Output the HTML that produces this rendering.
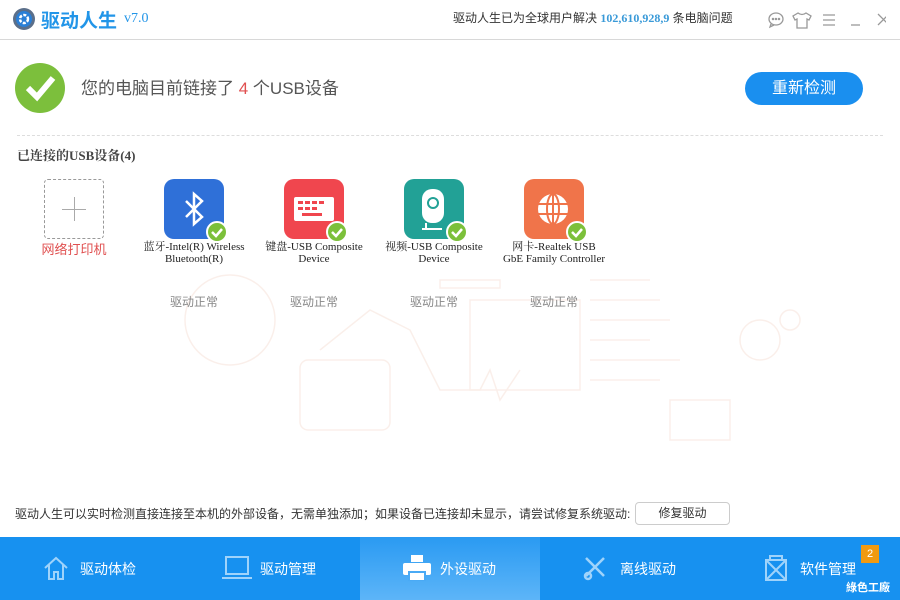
<!DOCTYPE html>
<html><head><meta charset="utf-8"><style>
*{margin:0;padding:0;box-sizing:border-box}
body{width:900px;height:600px;overflow:hidden;background:#fff;font-family:"Liberation Serif","Noto Serif CJK SC",serif;position:relative;color:#333}
.a{position:absolute}
.sans{font-family:"Liberation Sans","Noto Sans CJK SC",sans-serif}
.ic{position:absolute;width:60px;height:60px;border-radius:10px;top:179px}
.ck{position:absolute;right:-4px;bottom:-4px;width:22px;height:22px;border-radius:50%;background:#7cc03a;border:2px solid #fff}
.nm{position:absolute;top:241px;width:130px;text-align:center;font-size:11px;line-height:12px;color:#222}
.st{position:absolute;top:293px;width:80px;text-align:center;font-size:12px;color:#888}
.tab{position:absolute;top:537px;height:63px;width:180px;color:#fff;font-size:14px}
.tab span{position:absolute;left:80px;top:22px}
</style></head><body>
<div class="a" style="left:0;top:0;width:900px;height:40px;border-bottom:1px solid #d8d8d8"></div>
<svg class="a" style="left:12px;top:7px" width="24" height="24"><circle cx="12" cy="12" r="11" fill="#5b6f8a"/><circle cx="12" cy="12" r="8" fill="#2a7fd6"/><circle cx="12" cy="12" r="4" fill="none" stroke="#fff" stroke-width="2.5" stroke-dasharray="3 1.5"/></svg>
<div class="a sans" style="left:41px;top:6px;font-size:19px;color:#2295e8;font-weight:bold">驱动人生</div>
<div class="a" style="left:124px;top:11px;font-size:14px;color:#2295e8">v7.0</div>
<div class="a sans" style="left:453px;top:9px;font-size:12px;color:#333">驱动人生已为全球用户解决 <b style="color:#3a9ad8;font-family:'Liberation Serif'">102,610,928,9</b> 条电脑问题</div>
<svg class="a" style="left:766px;top:10px" width="120" height="20" fill="none" stroke="#999" stroke-width="1.3">
<ellipse cx="10" cy="9" rx="7" ry="6"/><path d="M5 14l-1 3 4-2"/><circle cx="7" cy="9" r=".6" fill="#999"/><circle cx="10" cy="9" r=".6" fill="#999"/><circle cx="13" cy="9" r=".6" fill="#999"/>
<path d="M32 3l-5 3 2 4 2-1v9h10V9l2 1 2-4-5-3q-4 3-8 0z"/>
<path d="M57 5h12M57 10h12M57 15h12"/>
<path d="M85 15h9"/><path d="M112 4l11 11M123 4l-11 11"/></svg>
<svg class="a" style="left:15px;top:63px" width="50" height="50"><circle cx="25" cy="25" r="25" fill="#7cbf3c"/><path d="M13 25l9 9 16-19" stroke="#fff" stroke-width="6" fill="none"/></svg>
<div class="a sans" style="left:81px;top:74px;font-size:17px;color:#555">您的电脑目前链接了 <span style="color:#e05050">4</span> 个USB设备</div>
<div class="a sans" style="left:745px;top:72px;width:118px;height:33px;border-radius:17px;background:#1a8fef;color:#fff;font-size:16px;text-align:center;line-height:33px">重新检测</div>
<div class="a" style="left:17px;top:135px;width:866px;border-top:1px dashed #ddd"></div>
<div class="a" style="left:17px;top:145px;font-size:13px;font-weight:bold;color:#444">已连接的USB设备(4)</div>
<svg class="a" style="left:170px;top:260px;opacity:.18" width="700" height="190" fill="none" stroke="#e8a890" stroke-width="1.5">
<circle cx="60" cy="60" r="45"/><rect x="300" y="40" width="110" height="90"/><rect x="270" y="20" width="60" height="8"/><path d="M150 90l50-40 40 20 30 60 40 0 10-20 10 30 20-30"/><rect x="130" y="100" width="90" height="70" rx="8"/><path d="M420 20h60M420 40h70M420 60h80M420 80h60M420 100h90M420 120h70"/><circle cx="590" cy="80" r="20"/><circle cx="620" cy="60" r="10"/><path d="M500 140h60v40h-60z"/></svg>
<div class="a" style="left:44px;top:179px;width:60px;height:60px;border:1px dashed #999;border-radius:4px"></div>
<div class="a" style="left:62px;top:209px;width:24px;border-top:1px solid #aaa"></div>
<div class="a" style="left:74px;top:197px;height:24px;border-left:1px solid #aaa"></div>
<div class="a sans" style="left:34px;top:239px;width:80px;text-align:center;font-size:13px;color:#e05050">网络打印机</div>
<div class="ic" style="left:164px;background:#2f70d8"><svg width="60" height="60"><path d="M22 22l16 16-8 7V15l8 7-16 16" stroke="#fff" stroke-width="2.5" fill="none"/></svg><div class="ck"><svg width="18" height="18"><path d="M4 9l4 4 6-7" stroke="#fff" stroke-width="2.5" fill="none"/></svg></div></div>
<div class="ic" style="left:284px;background:#f0464e"><svg width="60" height="60"><rect x="10" y="18" width="40" height="24" rx="2" fill="#fff"/><g fill="#f0464e"><rect x="14" y="22" width="5" height="3"/><rect x="21" y="22" width="5" height="3"/><rect x="28" y="22" width="5" height="3"/><rect x="35" y="22" width="5" height="3"/><rect x="14" y="28" width="5" height="3"/><rect x="21" y="28" width="5" height="3"/><rect x="28" y="28" width="5" height="3"/><rect x="18" y="34" width="20" height="3"/></g></svg><div class="ck"><svg width="18" height="18"><path d="M4 9l4 4 6-7" stroke="#fff" stroke-width="2.5" fill="none"/></svg></div></div>
<div class="ic" style="left:404px;background:#22a196"><svg width="60" height="60"><rect x="18" y="10" width="22" height="34" rx="10" fill="#fff"/><circle cx="29" cy="24" r="5" fill="none" stroke="#22a196" stroke-width="2"/><path d="M18 50h20M22 44v6" stroke="#fff" stroke-width="2"/></svg><div class="ck"><svg width="18" height="18"><path d="M4 9l4 4 6-7" stroke="#fff" stroke-width="2.5" fill="none"/></svg></div></div>
<div class="ic" style="left:524px;background:#f0744a"><svg width="60" height="60"><circle cx="29" cy="30" r="15" fill="#fff"/><g stroke="#f0744a" stroke-width="2" fill="none"><ellipse cx="29" cy="30" rx="6" ry="15"/><path d="M14 25h30M14 35h30M29 15v30"/></g></svg><div class="ck"><svg width="18" height="18"><path d="M4 9l4 4 6-7" stroke="#fff" stroke-width="2.5" fill="none"/></svg></div></div>
<div class="nm" style="left:129px">蓝牙-Intel(R) Wireless<br>Bluetooth(R)</div>
<div class="nm" style="left:249px">键盘-USB Composite<br>Device</div>
<div class="nm" style="left:369px">视频-USB Composite<br>Device</div>
<div class="nm" style="left:489px">网卡-Realtek USB<br>GbE Family Controller</div>
<div class="st sans" style="left:154px">驱动正常</div>
<div class="st sans" style="left:274px">驱动正常</div>
<div class="st sans" style="left:394px">驱动正常</div>
<div class="st sans" style="left:514px">驱动正常</div>
<div class="a sans" style="left:15px;top:505px;font-size:12px;color:#333">驱动人生可以实时检测直接连接至本机的外部设备，无需单独添加；如果设备已连接却未显示，请尝试修复系统驱动:</div>
<div class="a sans" style="left:635px;top:502px;width:95px;height:23px;border:1px solid #ccc;border-radius:4px;text-align:center;line-height:21px;font-size:12px;color:#333">修复驱动</div>
<div class="a" style="left:0;top:537px;width:900px;height:63px;background:#1791f0"></div>
<div class="a" style="left:360px;top:537px;width:180px;height:63px;background:linear-gradient(#2a9af2,#5db5f8)"></div>
<div class="tab sans" style="left:0"><svg class="a" style="left:43px;top:18px" width="26" height="26" fill="none" stroke="#9fd3fb" stroke-width="2"><path d="M2 13L13 3l11 10M6 10v14h5v-7h4v7h5V10"/></svg><span>驱动体检</span></div>
<div class="tab sans" style="left:180px"><svg class="a" style="left:42px;top:18px" width="30" height="26" fill="none" stroke="#9fd3fb" stroke-width="2"><rect x="4" y="2" width="22" height="17"/><path d="M0 23h30"/></svg><span>驱动管理</span></div>
<div class="tab sans" style="left:360px"><svg class="a" style="left:42px;top:18px" width="30" height="26" fill="#fff"><rect x="9" y="0" width="12" height="7"/><rect x="1" y="8" width="28" height="12" rx="2"/><rect x="7" y="17" width="16" height="9" fill="#fff" stroke="#4aaaf5" stroke-width="2"/></svg><span>外设驱动</span></div>
<div class="tab sans" style="left:540px"><svg class="a" style="left:42px;top:17px" width="28" height="28" fill="none" stroke="#9fd3fb" stroke-width="2.5"><path d="M4 4l18 18M22 4L4 22"/><circle cx="6" cy="22" r="3"/></svg><span>离线驱动</span></div>
<div class="tab sans" style="left:720px"><svg class="a" style="left:44px;top:17px" width="24" height="28" fill="none" stroke="#9fd3fb" stroke-width="2"><rect x="2" y="6" width="20" height="20"/><path d="M6 6V2h12v4M2 6l20 20M22 6L2 26"/></svg><span>软件管理</span></div>
<div class="a sans" style="left:861px;top:545px;width:18px;height:18px;background:#f09a10;color:#fff;font-size:11px;text-align:center;line-height:18px">2</div>
<div class="a sans" style="left:846px;top:579px;font-size:11px;color:#fff;font-weight:bold">綠色工廠</div>
</body></html>
